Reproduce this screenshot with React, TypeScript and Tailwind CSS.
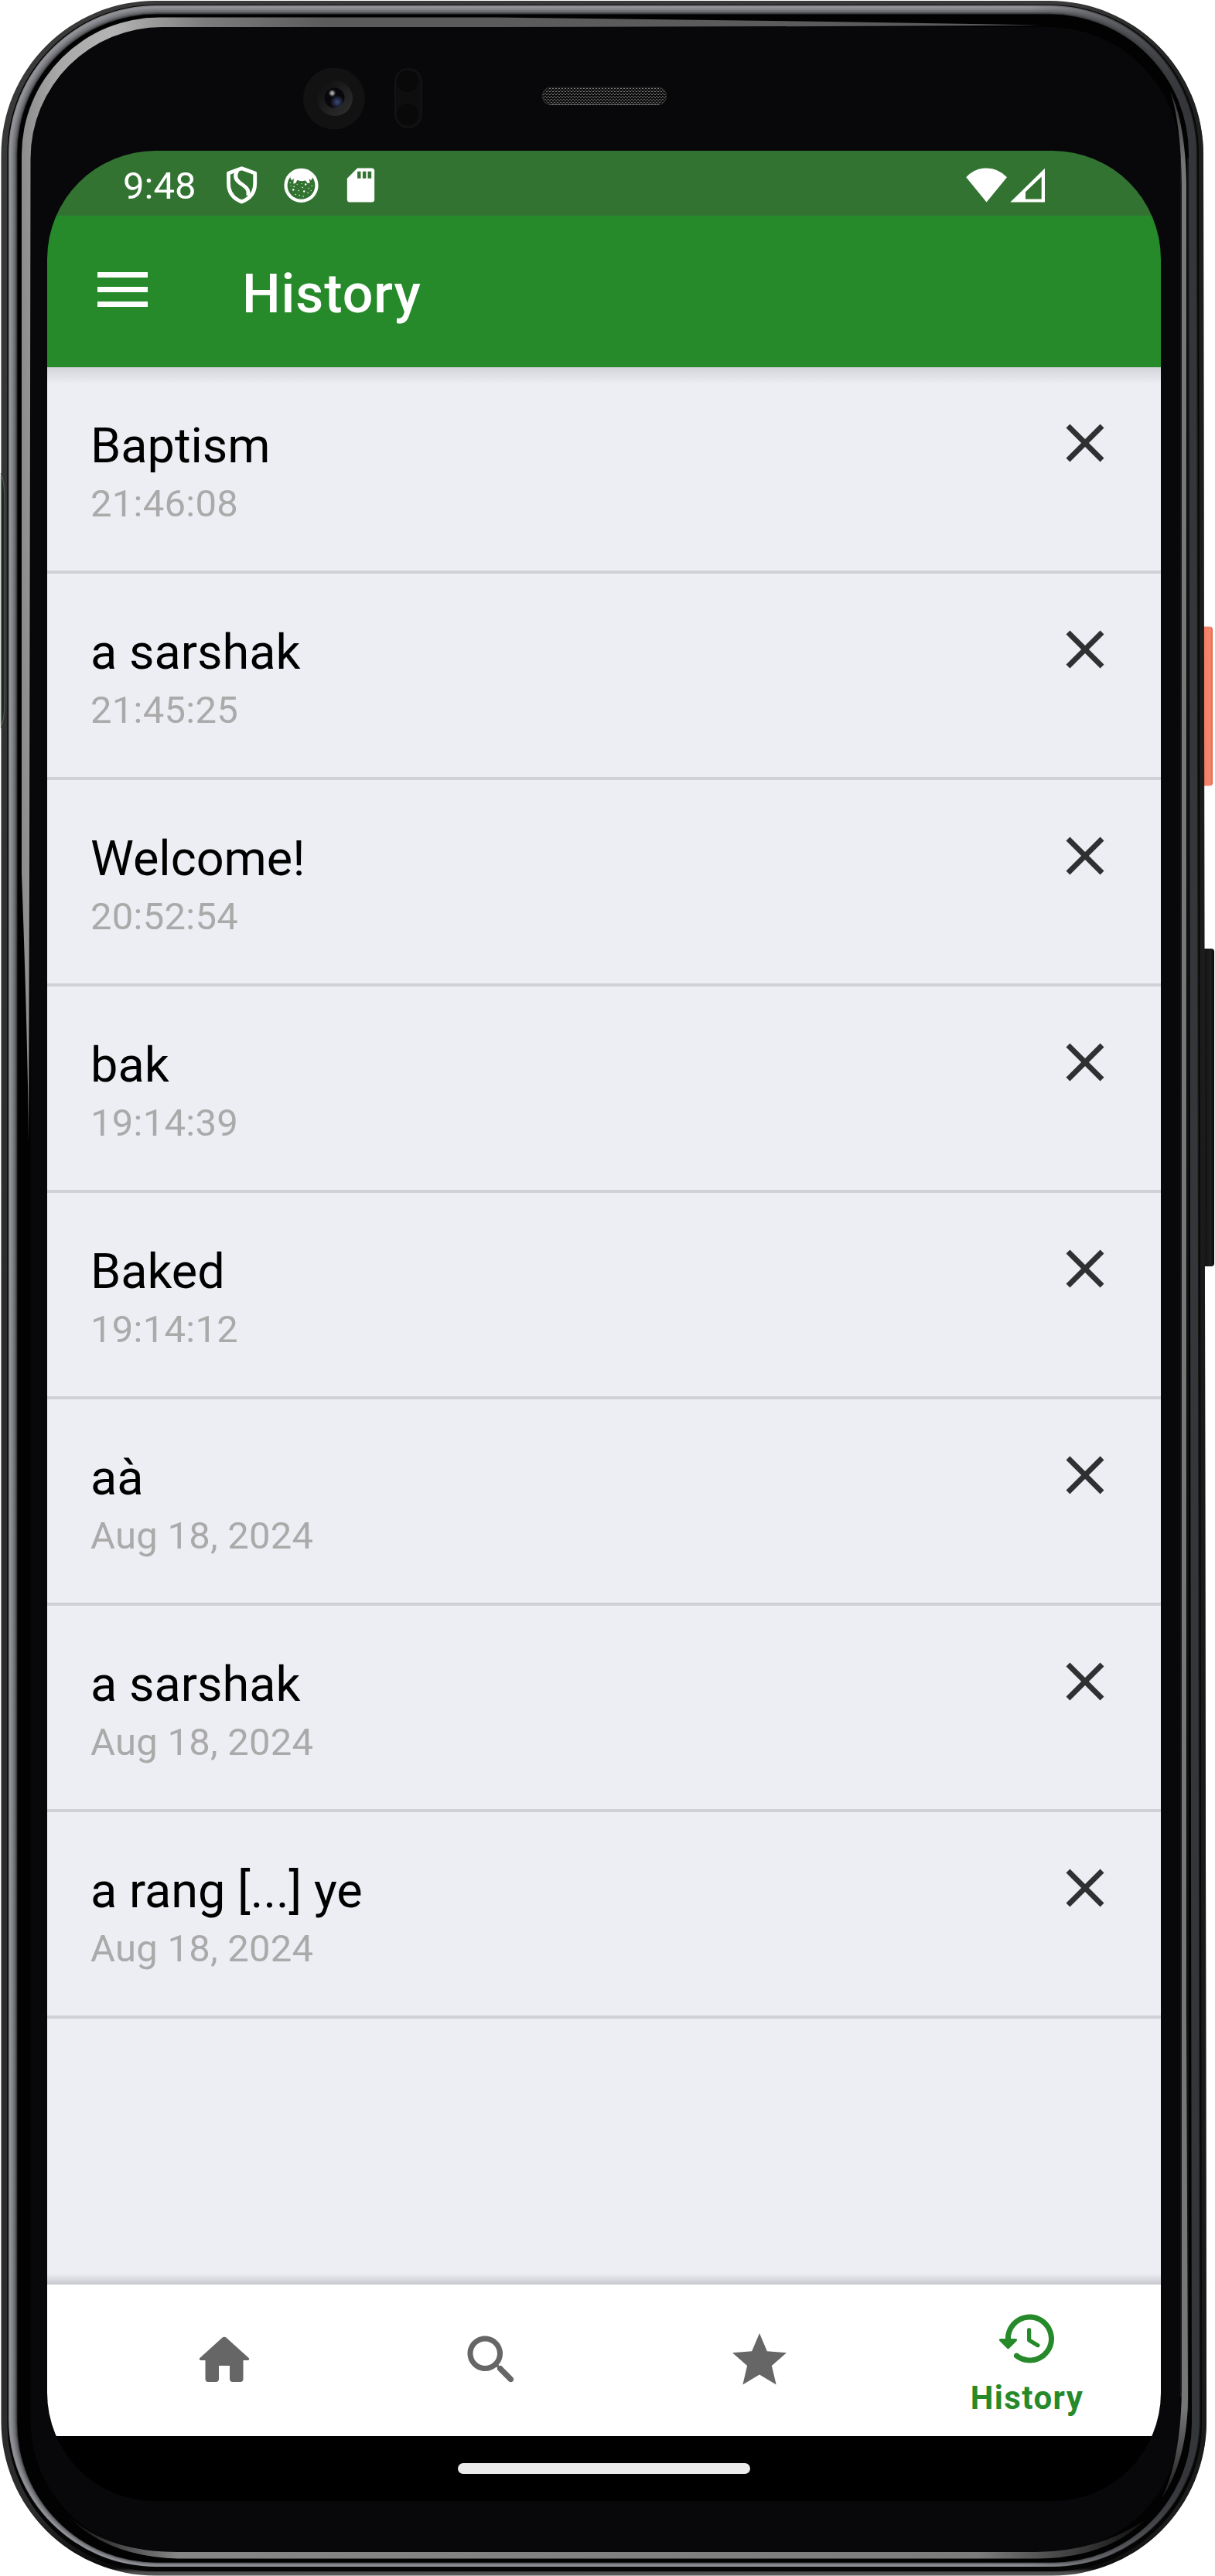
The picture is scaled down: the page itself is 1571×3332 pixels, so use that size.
import React from "react";

type Entry = { title: string; when: string };

const entries: Entry[] = [
  { title: "Baptism", when: "21:46:08" },
  { title: "a sarshak", when: "21:45:25" },
  { title: "Welcome!", when: "20:52:54" },
  { title: "bak", when: "19:14:39" },
  { title: "Baked", when: "19:14:12" },
  { title: "aà", when: "Aug 18, 2024" },
  { title: "a sarshak", when: "Aug 18, 2024" },
  { title: "a rang [...] ye", when: "Aug 18, 2024" },
];

// Rounded outline of one layer of the phone's shell.
function shell(l: number, t: number, r: number, b: number, q: number) {
  return `M${l} ${t + q}A${q} ${q} 0 0 1 ${l + q} ${t}H${r - 4 - q}A${q} ${q} 0 0 1 ${r - 4} ${t + q}L${r} ${b - q}A${q} ${q} 0 0 1 ${r - q} ${b}H${l + q}A${q} ${q} 0 0 1 ${l} ${b - q}Z`;
}

const railShades = ["#85878b", "#929499", "#898b90", "#808287", "#74767b", "#66686c", "#4c4e51", "#2a2b2d"];

function PhoneBody() {
  return (
    <svg className="absolute inset-0" width="1571" height="3332" viewBox="0 0 1571 3332" aria-hidden="true">
      <defs>
        <linearGradient id="outer" gradientUnits="userSpaceOnUse" x1="0" y1="0" x2="0" y2="3332">
          <stop offset="0" stopColor="#393a39" />
          <stop offset="0.5" stopColor="#2b2c2b" />
          <stop offset="0.975" stopColor="#2b2c2b" />
          <stop offset="0.997" stopColor="#0a0a0a" />
          <stop offset="0.9985" stopColor="#4c4c4c" />
          <stop offset="1" stopColor="#5c5c5c" />
        </linearGradient>
        <linearGradient id="outerRight" gradientUnits="userSpaceOnUse" x1="1380" y1="0" x2="1560" y2="0">
          <stop offset="0" stopColor="#141414" stopOpacity="0" />
          <stop offset="1" stopColor="#141414" stopOpacity="0.75" />
        </linearGradient>
        {railShades.map((c, i) => (
          <linearGradient key={i} id={`rail${i}`} gradientUnits="userSpaceOnUse" x1="1330" y1="0" x2="1530" y2="0">
            <stop offset="0" stopColor={c} />
            <stop offset="1" stopColor={i === 0 ? "#161717" : "#343639"} />
          </linearGradient>
        ))}
        <linearGradient id="rimTop" gradientUnits="userSpaceOnUse" x1="28" y1="0" x2="420" y2="0">
          <stop offset="0" stopColor="#8c8c8c" />
          <stop offset="0.12" stopColor="#a8a8a8" />
          <stop offset="0.3" stopColor="#b4b4b4" />
          <stop offset="0.6" stopColor="#7c7c7c" />
          <stop offset="1" stopColor="#5b5b5b" />
        </linearGradient>
        <linearGradient id="rimBottom" gradientUnits="userSpaceOnUse" x1="90" y1="0" x2="1490" y2="0">
          <stop offset="0" stopColor="#111" />
          <stop offset="0.1" stopColor="#868686" />
          <stop offset="0.84" stopColor="#7c7c7c" />
          <stop offset="1" stopColor="#0a0a0a" />
        </linearGradient>
        <linearGradient id="rimRight" gradientUnits="userSpaceOnUse" x1="0" y1="120" x2="0" y2="3240">
          <stop offset="0" stopColor="#333" />
          <stop offset="0.03" stopColor="#777" />
          <stop offset="0.96" stopColor="#767676" />
          <stop offset="1" stopColor="#151515" />
        </linearGradient>
        <linearGradient id="power" x1="0" y1="0" x2="1" y2="0">
          <stop offset="0" stopColor="#d9492c" />
          <stop offset="0.25" stopColor="#f47f65" />
          <stop offset="0.75" stopColor="#f3886f" />
          <stop offset="1" stopColor="#e96145" />
        </linearGradient>
        <linearGradient id="volume" x1="0" y1="0" x2="1" y2="0">
          <stop offset="0" stopColor="#0c0c0c" />
          <stop offset="0.7" stopColor="#1f1f1f" />
          <stop offset="1" stopColor="#0a0a0a" />
        </linearGradient>
        <linearGradient id="lensRing" x1="0" y1="0" x2="1" y2="1">
          <stop offset="0" stopColor="#0c0c0c" />
          <stop offset="1" stopColor="#303031" />
        </linearGradient>
        <radialGradient id="lensBlue">
          <stop offset="0" stopColor="#3d4a78" />
          <stop offset="1" stopColor="#3d4a78" stopOpacity="0" />
        </radialGradient>
        <radialGradient id="lensGlint">
          <stop offset="0" stopColor="#c8c4c4" />
          <stop offset="0.4" stopColor="#8a8888" />
          <stop offset="1" stopColor="#555" stopOpacity="0" />
        </radialGradient>
        <pattern id="mesh" width="4" height="4" patternUnits="userSpaceOnUse">
          <rect width="4" height="4" fill="#0d0d0d" />
          <rect x="0" y="0" width="2" height="1" fill="#6a6a6a" />
          <rect x="2" y="2" width="2" height="1" fill="#7c7c7c" />
        </pattern>
      </defs>

      <rect x="1554" y="810.5" width="14" height="206" rx="4" fill="url(#power)" />
      <rect x="1554" y="1227" width="16" height="411" rx="4" fill="url(#volume)" />

      <path d={shell(1.5, 1, 1560, 3331.5, 199)} fill="url(#outer)" />
      <path d={shell(1.5, 1, 1560, 3331.5, 199)} fill="url(#outerRight)" />
      <path d={shell(9.5, 6, 1554, 3326, 192)} fill="#050505" />
      {railShades.map((_, i) => (
        <path
          key={i}
          d={shell(11 + i * 1.5, 7 + i * 1.5, 1552.5 - i * 1.6, 3320 - i * 0.8, 191 - i * 1.3)}
          fill={`url(#rail${i})`}
        />
      ))}
      <path d={shell(22.5, 18.5, 1541, 3314.5, 180)} fill="#020202" />
      <path d="M1527 205V3100" stroke="#2d2e30" strokeWidth="1" />
      <path d="M1536 205V3120" stroke="#232426" strokeWidth="1" />
      <path d="M39.5 1400V205A170 170 0 0 1 210 35H1355A170 170 0 0 1 1526 205V3131A170 170 0 0 1 1356 3301H210A170 170 0 0 1 39.5 3131Z" fill="#08080a" />
      <path
        d="M37 1476Q36 1350 28 1130V200A178 178 0 0 1 206 22.5H640L1071 28L1345 32.5L1071 34L640 35H210A170 170 0 0 0 39.500 205L38 1130Z"
        fill="url(#rimTop)"
      />
      <path d="M1513 118Q1533 160 1534 240V2600L1536 3100Q1536 3180 1502 3232Q1527 3180 1528 3090V240Q1527 160 1513 118Z" fill="url(#rimRight)" />
      <path d="M90 3256Q140 3301 230 3301H1340Q1420 3300 1480 3260Q1430 3309 1340 3309.5H230Q140 3307 90 3256Z" fill="url(#rimBottom)" />
      <path d="M1 612Q6 622 6 650V905Q6 930 1 942" fill="#202826" stroke="#56615d" strokeWidth="1" />
      <rect x="0" y="616" width="1.5" height="322" fill="#d5dcd8" />

      <circle cx="432" cy="127.5" r="40" fill="#121213" />
      <circle cx="433" cy="127" r="23" fill="url(#lensRing)" />
      <circle cx="432.5" cy="126.5" r="13" fill="#08080c" />
      <circle cx="436" cy="132" r="9" fill="url(#lensBlue)" />
      <circle cx="429.5" cy="120.5" r="5" fill="url(#lensGlint)" />
      <rect x="511" y="89" width="34" height="76" rx="17" fill="#0e0e0f" stroke="#131314" strokeWidth="2" />
      <circle cx="527" cy="105" r="14" fill="#09090a" />
      <circle cx="527" cy="148" r="14" fill="#09090a" />
      <rect x="701.5" y="113" width="160" height="22.5" rx="11" fill="url(#mesh)" stroke="#2c2c2c" strokeWidth="1.2" />
      <path d="M711 135.5H852" stroke="#555" strokeWidth="1" />
    </svg>
  );
}

function ShieldIcon() {
  return (
    <svg className="size-[53px]" viewBox="286 212.5 53 53" fill="none" stroke="#fff" strokeWidth="4.8" strokeLinejoin="round">
      <path d="M312.5 217.3L295.5 223.6V237C295.5 248.5 302 256.5 312.5 260.5C323 256.5 329.7 248.5 329.7 237V223.6Z" />
      <path d="M307 220.5C303.2 226 303.8 231 309.5 235.5C316 240.5 323.5 244 320.5 252.5" />
      <path d="M319.5 247.5L322.5 252" strokeWidth="3" />
    </svg>
  );
}

function FaceIcon() {
  const dots = [
    [375, 236, 0.7], [380, 241, 0.8], [379, 245, 1.2], [386, 246, 0.7], [391, 242, 0.8], [395, 238, 1.2],
    [399, 243, 0.7], [403, 240, 0.7], [393, 247, 1.2], [387, 252, 0.8], [382, 251, 0.7], [398, 249, 0.8],
    [384, 238, 0.6], [390, 237, 0.6], [376, 240, 0.6], [392, 253.5, 0.7], [402, 246, 0.6],
  ];
  return (
    <svg className="size-[53px]" viewBox="362.8 212.5 53 53" fill="#fff">
      <circle cx="389.3" cy="239.3" r="20" fill="none" stroke="#fff" strokeWidth="4.2" />
      <path d="M375 229Q381 219 389.3 219Q398 219 404 229L402 233L399.5 230.5L400.5 236L397.5 236.5L395 233L389.5 233.8L384 232.5L382 236.5L379 237L379.8 230.5L377 233Z" />
      {dots.map(([x, y, r], i) => (
        <circle key={i} cx={x} cy={y} r={r} />
      ))}
    </svg>
  );
}

function SdCardIcon() {
  return (
    <svg className="size-[53px]" viewBox="0 0 24 24" fill="#fff">
      <path d="M18.3 2H10L4.02 8L4 20.5C4 21.4 4.6 22 5.5 22H18.5C19.4 22 20 21.4 20 20.5V3.5C20 2.6 19.4 2 18.3 2ZM12 8H10V4H12ZM15.1 8H13.1V4H15.1ZM18.2 8H16.1V4H18.2Z" />
    </svg>
  );
}

function StatusBar() {
  return (
    <div className="flex h-[84px] items-center bg-[#337332] pt-[4px] pr-[150px] pl-[98px]">
      <span className="w-[127px] pt-[3px] text-[49px] leading-[60px] text-white">9:48</span>
      <div className="flex gap-[24px]">
        <ShieldIcon />
        <FaceIcon />
        <SdCardIcon />
      </div>
      <div className="ml-auto flex gap-[4px]">
        <svg className="h-[45px] w-[53px]" viewBox="1249 216 53 45" fill="#fff">
          <path d="M1249.2 228.3Q1260 216.4 1275.6 216.4Q1291 216.4 1302 228.3L1275.6 260.5Z" />
        </svg>
        <svg className="h-[45px] w-[45px]" viewBox="1306 216 45 45" fill="#fff" fillRule="evenodd">
          <path d="M1306.3 260.6L1351 216.8V260.6ZM1326 247.3V256.5H1346.7V227.5Z" />
        </svg>
      </div>
    </div>
  );
}

function AppBar() {
  return (
    <header className="flex h-[196px] items-center bg-[#268a2a] pl-[65px]">
      <div className="flex w-[187px] flex-col gap-[12px] pb-[5px]">
        <span className="h-[7px] w-[65px] bg-white" />
        <span className="h-[7px] w-[65px] bg-white" />
        <span className="h-[7px] w-[65px] bg-white" />
      </div>
      <h1 className="pt-[6px] text-[70px] leading-[84px] font-medium tracking-[0.9px] text-white">History</h1>
    </header>
  );
}

function HistoryRow({ title, when }: Entry) {
  return (
    <li className="flex h-[267px] justify-between border-b-[4px] border-[#d0d1d6] pr-[56px] pl-[56px]">
      <div className="pt-[58px]">
        <div className="text-[63px] leading-[88px] text-black">{title}</div>
        <div className="pt-px text-[49px] leading-[60px] tracking-[0.25px] text-[#aaaaaa]">{when}</div>
      </div>
      <svg className="mt-[56px] size-[84px]" viewBox="0 0 24 24" fill="#2e3032">
        <path d="M19 6.41L17.59 5 12 10.59 6.41 5 5 6.41 10.59 12 5 17.59 6.41 19 12 13.41 17.59 19 19 17.59 13.41 12z" />
      </svg>
    </li>
  );
}

const icons = {
  home: "M10 19v-5h4v5c0 .55.45 1 1 1h3c.55 0 1-.45 1-1v-7h1.7c.46 0 .68-.57.33-.87L12.67 3.6c-.38-.34-.96-.34-1.34 0l-8.36 7.53c-.34.3-.13.87.33.87H5v7c0 .55.45 1 1 1h3c.55 0 1-.45 1-1z",
  search:
    "M15.5 14h-.79l-.28-.27c1.2-1.4 1.82-3.31 1.48-5.34-.47-2.78-2.79-5-5.59-5.34-4.23-.52-7.79 3.04-7.27 7.27.34 2.8 2.56 5.12 5.34 5.59 2.03.34 3.94-.28 5.34-1.48l.27.28v.79l4.25 4.25c.41.41 1.08.41 1.49 0 .41-.41.41-1.08 0-1.49L15.5 14zm-6 0C7.01 14 5 11.99 5 9.5S7.01 5 9.5 5 14 7.01 14 9.5 11.99 14 9.5 14z",
  star: "M12 17.27L18.18 21l-1.64-7.03L22 9.24l-7.19-.61L12 2 9.19 8.63 2 9.24l5.46 4.73L5.82 21z",
  history:
    "M13.26 3C8.17 2.86 4 6.95 4 12H2.21c-.45 0-.67.54-.35.85l2.79 2.8c.2.2.51.2.71 0l2.79-2.8c.31-.31.09-.85-.36-.85H6c0-3.9 3.18-7.05 7.1-7 3.72.05 6.85 3.18 6.9 6.9.05 3.91-3.1 7.1-7 7.1-1.61 0-3.1-.55-4.28-1.48-.4-.31-.96-.28-1.32.08-.42.42-.39 1.13.08 1.49C9 20.29 10.91 21 13 21c5.05 0 9.14-4.17 9-9.26-.13-4.69-4.05-8.61-8.74-8.74zm-.51 5c-.41 0-.75.34-.75.75v3.68c0 .35.19.68.49.86l3.12 1.85c.36.21.82.09 1.03-.26.21-.36.09-.82-.26-1.03l-2.88-1.71v-3.4c0-.4-.34-.74-.75-.74z",
};

function NavIcon({ d }: { d: string }) {
  return (
    <svg className="size-[84px] fill-current" viewBox="0 0 24 24">
      <path d={d} />
    </svg>
  );
}

function BottomNav() {
  return (
    <nav className="relative grid h-[196px] grid-cols-4 bg-white pl-[56px] text-[#666666]">
      <div className="absolute -top-[14px] left-0 h-[14px] w-full bg-gradient-to-b from-black/0 to-black/16" />
      <a className="flex items-center justify-center"><NavIcon d={icons.home} /></a>
      <a className="flex items-center justify-center"><NavIcon d={icons.search} /></a>
      <a className="flex items-center justify-center"><NavIcon d={icons.star} /></a>
      <a className="flex flex-col items-center pt-[28px] text-[#268a2a]">
        <NavIcon d={icons.history} />
        <span className="mt-[10px] text-[42px] leading-[50px] font-bold tracking-[1.4px]">History</span>
      </a>
    </nav>
  );
}

export default function App() {
  return (
    <div className="relative h-[3332px] w-[1571px] overflow-hidden bg-white pt-[195px] pl-[61px] font-['Roboto',sans-serif]">
      <PhoneBody />
      <div className="relative flex h-[3040px] w-[1440px] flex-col overflow-hidden rounded-[140px] bg-black">
        <StatusBar />
        <AppBar />
        <main className="relative grow bg-[#edeef4]">
          <div className="absolute top-0 left-0 h-[22px] w-full bg-gradient-to-b from-black/11 to-black/0" />
          <ul>
            {entries.map((e, i) => (
              <HistoryRow key={i} {...e} />
            ))}
          </ul>
        </main>
        <BottomNav />
        <div className="flex h-[84px] items-start justify-center bg-black pt-[35px]">
          <div className="h-[14px] w-[378px] rounded-full bg-[#ebebeb]" />
        </div>
      </div>
    </div>
  );
}
